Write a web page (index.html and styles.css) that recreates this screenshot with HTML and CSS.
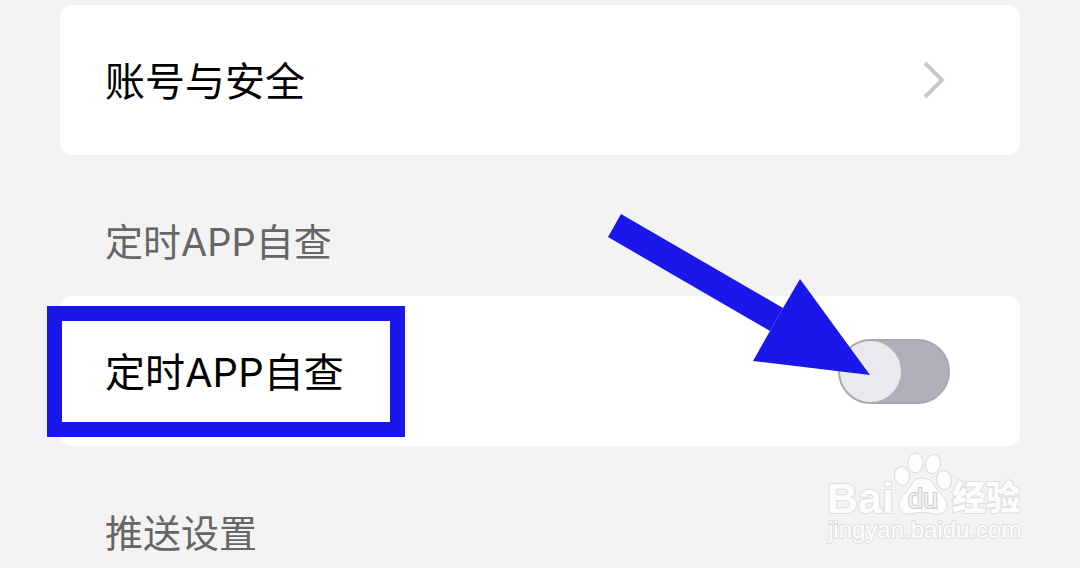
FILE: index.html
```html
<!DOCTYPE html>
<html lang="zh-CN">
<head>
<meta charset="utf-8">
<meta name="viewport" content="width=device-width, initial-scale=1">
<title>设置</title>
<link rel="stylesheet" href="styles.css">
</head>
<body>
<main class="settings">
  <a class="card" href="#account">
    <span class="card-label">账号与安全</span>
    <svg class="chevron" viewBox="0 0 24 40" aria-hidden="true"><path d="M3 3 20 20 3 37"/></svg>
  </a>
  <h2 class="section-title">定时APP自查</h2>
  <div class="card">
    <label class="card-label" for="self-check">定时APP自查</label>
    <span class="highlight"></span>
    <span class="switch-wrap">
      <input class="switch" type="checkbox" role="switch" id="self-check">
      <svg class="arrow" viewBox="0 0 262 162" aria-hidden="true">
        <path d="M13 0 175 94 192 65 262 161 145 147 162 117 0 23Z"/>
        <path class="arrow-seam" d="M175 94 162 117"/>
      </svg>
    </span>
  </div>
  <h2 class="section-title">推送设置</h2>
</main>
<svg class="watermark" viewBox="0 0 200 100" role="img" aria-label="Baidu 经验">
  <text class="mark-brand" x="1" y="65">Bai</text>
  <ellipse cx="76" cy="28" rx="7.5" ry="9.5" transform="rotate(-12 76 28)"/>
  <ellipse cx="89.500" cy="15" rx="7.500" ry="10"/>
  <ellipse cx="107" cy="16" rx="7.500" ry="9.500" transform="rotate(14 107 16)"/>
  <ellipse cx="118" cy="32" rx="7.500" ry="9.500" transform="rotate(-8 118 32)"/>
  <path d="M96 30C103 30 107 34 110 40C114 46 121 50 121 57C121 65 114 67 108 66C100 64 92 64 85 66C78 67 73 63 73 56C73 49 80 46 84 39C87 33 90 30 96 30Z"/>
  <text class="mark-du" x="97" y="60">du</text>
  <text class="mark-cjk" x="126" y="62">经验</text>
  <text class="mark-url" x="2" y="90">jingyan.baidu.com</text>
</svg>
</body>
</html>
```
FILE: styles.css
```css
* { box-sizing: border-box; }

body {
  margin: 0;
  overflow: hidden;
  background: #f3f3f3;
  color: #000;
  font-family: Inter, "Noto Sans CJK SC", sans-serif;
}

.settings {
  display: flex;
  flex-direction: column;
  padding: 5px 60px 0;
}

.card {
  position: relative;
  display: flex;
  align-items: center;
  justify-content: space-between;
  min-height: 150px;
  padding: 0 70px 0 45px;
  border-radius: 12px;
  background: #fff;
  color: inherit;
  text-decoration: none;
}

.card-label {
  padding-top: 3px;
  font-size: 40px;
  line-height: 48px;
}

.chevron {
  width: 24px;
  height: 40px;
  margin-right: 4px;
  fill: none;
  stroke: #c9c9c9;
  stroke-width: 4;
}

.section-title {
  margin: 65px 45px 32px;
  color: #666;
  font-size: 38px;
  font-weight: 400;
  line-height: 44px;
}

.section-title:last-child { margin-bottom: 0; }

.highlight {
  position: absolute;
  top: 10px;
  left: -13px;
  width: 358px;
  height: 131px;
  border: 15px solid #1a17ea;
  pointer-events: none;
}

.switch-wrap {
  position: relative;
  display: flex;
}

.switch {
  appearance: none;
  display: flex;
  width: 112px;
  height: 65px;
  margin: 0;
  border: 2px solid #a9a9ae;
  border-radius: 33px;
  background: #b0b0bd;
}

.switch::before {
  content: "";
  width: 61px;
  height: 61px;
  border-radius: 50%;
  background: #e8eaee;
}

.switch:checked { justify-content: flex-end; }

.arrow {
  position: absolute;
  right: 80px;
  bottom: 28px;
  width: 262px;
  height: 162px;
  fill: #1a17ea;
  pointer-events: none;
}

.arrow-seam {
  stroke: #4a48e0;
  stroke-width: 1;
}

.watermark {
  position: absolute;
  right: 54px;
  bottom: 20px;
  width: 200px;
  height: 100px;
  fill: #fdfdfd;
  stroke: #dadada;
  stroke-width: 1;
}

.watermark text {
  paint-order: stroke;
  stroke: #dedede;
  stroke-width: 2;
}

.mark-brand {
  font: bold 43px "Liberation Sans", sans-serif;
}

.watermark .mark-du {
  fill: #f0f0f0;
  stroke: #cccccc;
  font: 27px "Liberation Sans", sans-serif;
  text-anchor: middle;
}

.mark-cjk {
  font: 900 34px "Noto Sans CJK SC", sans-serif;
}

.mark-url {
  font: 24px "Liberation Sans", sans-serif;
}
```
